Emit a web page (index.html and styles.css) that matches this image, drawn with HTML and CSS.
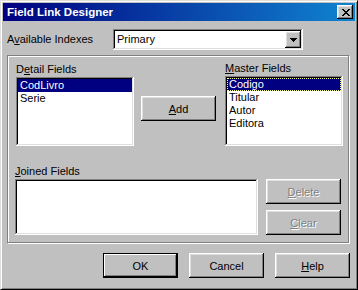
FILE: index.html
```html
<!DOCTYPE html>
<html lang="en">

<head>
    <meta charset="UTF-8">
    <title>Field Link Designer</title>
    <link rel="stylesheet" href="styles.css">
</head>

<body>
    <div class="window">
        <div class="titlebar">
            <span class="title">Field Link Designer</span>
            <div class="close-btn">
                <svg width="8" height="7" viewBox="0 0 8 7" shape-rendering="crispEdges">
                    <path fill="#000" d="M0 0h2v1H0z M6 0h2v1H6z M1 1h2v1H1z M5 1h2v1H5z M2 2h4v1H2z M3 3h2v1H3z M2 4h4v1H2z M1 5h2v1H1z M5 5h2v1H5z M0 6h2v1H0z M6 6h2v1H6z" />
                </svg>
            </div>
        </div>

        <div class="index-row">
            <label class="index-label">A<u>v</u>ailable Indexes</label>
            <div class="combo">
                <span class="combo-text">Primary</span>
                <div class="combo-btn">
                    <svg width="7" height="4" viewBox="0 0 7 4" shape-rendering="crispEdges">
                        <path fill="#000" d="M0 0h7v1H0z M1 1h5v1H1z M2 2h3v1H2z M3 3h1v1H3z" />
                    </svg>
                </div>
            </div>
        </div>

        <div class="panel">
            <div class="top-row">
                <div class="detail-col">
                    <div class="caption">D<u>e</u>tail Fields</div>
                    <div class="listbox detail-list">
                        <div class="item selected">CodLivro</div>
                        <div class="item">Serie</div>
                    </div>
                </div>
                <button class="btn add-btn"><u>A</u>dd</button>
                <div class="master-col">
                    <div class="caption"><u>M</u>aster Fields</div>
                    <div class="listbox master-list">
                        <div class="item selected focused">Codigo</div>
                        <div class="item">Titular</div>
                        <div class="item">Autor</div>
                        <div class="item">Editora</div>
                    </div>
                </div>
            </div>

            <div class="bottom-row">
                <div class="joined-col">
                    <div class="caption"><u>J</u>oined Fields</div>
                    <div class="listbox joined-list"></div>
                </div>
                <div class="side-btns">
                    <button class="btn disabled"><u>D</u>elete</button>
                    <button class="btn disabled"><u>C</u>lear</button>
                </div>
            </div>
        </div>

        <div class="dialog-btns">
            <button class="btn default">OK</button>
            <button class="btn">Cancel</button>
            <button class="btn"><u>H</u>elp</button>
        </div>
    </div>
</body>

</html>
```

FILE: styles.css
```css
* {
    margin: 0;
    padding: 0;
    box-sizing: border-box;
}

body {
    font-family: "Liberation Sans", Arial, sans-serif;
    font-size: 11px;
    line-height: 13px;
    color: #000;
    background: #c0c0c0;
}

.window {
    width: 358px;
    height: 290px;
    background: #c0c0c0;
    border: 1px solid;
    border-color: #dfdfdf #000 #000 #dfdfdf;
    box-shadow: inset 1px 1px #fff, inset -1px -1px #808080;
    padding: 2px;
}

.titlebar {
    height: 18px;
    display: flex;
    align-items: center;
    justify-content: space-between;
    padding-left: 4px;
    padding-right: 2px;
    background: linear-gradient(to right, #000080, #1084d0);
}

.title {
    color: #fff;
    font-weight: bold;
    font-size: 11.5px;
}

.close-btn {
    width: 16px;
    height: 14px;
    background: #c0c0c0;
    box-shadow: inset -1px -1px #000, inset 1px 1px #fff, inset -2px -2px #808080, inset 2px 2px #dfdfdf;
    display: flex;
    align-items: center;
    justify-content: center;
    padding-left: 1px;
}

.index-row {
    display: flex;
    align-items: center;
    margin-top: 8px;
    height: 21px;
}

.index-label {
    width: 110px;
    padding-left: 4px;
}

.combo {
    width: 190px;
    height: 21px;
    background: #fff;
    box-shadow: inset -1px -1px #fff, inset 1px 1px #808080, inset -2px -2px #dfdfdf, inset 2px 2px #000;
    display: flex;
    align-items: center;
    justify-content: space-between;
    padding: 2px;
}

.combo-text {
    padding-left: 2px;
}

.combo-btn {
    width: 16px;
    height: 17px;
    background: #c0c0c0;
    box-shadow: inset -1px -1px #000, inset 1px 1px #fff, inset -2px -2px #808080, inset 2px 2px #dfdfdf;
    display: flex;
    align-items: center;
    justify-content: center;
}

.panel {
    width: 342px;
    height: 188px;
    margin: 5px 0 0 4px;
    border: 1px solid #808080;
    box-shadow: 1px 1px #fff, inset 1px 1px #fff;
}

.top-row {
    display: flex;
    align-items: flex-start;
    padding: 6px 0 0 8px;
}

.caption {
    height: 13px;
    margin-bottom: 1px;
}

.detail-col {
    width: 118px;
    margin-top: 1px;
}

.master-col {
    width: 118px;
    margin-left: 9px;
}

.listbox {
    background: #fff;
    box-shadow: inset -1px -1px #fff, inset 1px 1px #808080, inset -2px -2px #dfdfdf, inset 2px 2px #000;
    padding: 2px;
}

.detail-list {
    height: 69px;
}

.master-list {
    height: 70px;
}

.item {
    height: 13px;
    line-height: 13px;
    padding-left: 2px;
}

.item.selected {
    background: #000080;
    color: #fff;
}

.item.focused {
    outline: 1px dotted #ffff80;
    outline-offset: -1px;
}

.btn {
    width: 75px;
    height: 25px;
    border: none;
    background: #c0c0c0;
    font-family: "Liberation Sans", Arial, sans-serif;
    font-size: 11px;
    color: #000;
    box-shadow: inset -1px -1px #000, inset 1px 1px #fff, inset -2px -2px #808080, inset 2px 2px #dfdfdf;
}

.btn.default {
    border: 1px solid #000;
    box-shadow: inset -1px -1px #000, inset 1px 1px #fff, inset -2px -2px #808080;
}

.btn.disabled {
    color: #808080;
    text-shadow: 1px 1px #fff;
}

.add-btn {
    margin: 34px 0 0 7px;
}

.bottom-row {
    display: flex;
    align-items: flex-start;
    margin-top: 19px;
    padding-left: 7px;
}

.joined-col {
    width: 243px;
}

.joined-list {
    height: 56px;
}

.side-btns {
    display: flex;
    flex-direction: column;
    gap: 6px;
    margin: 14px 0 0 8px;
}

.dialog-btns {
    display: flex;
    justify-content: flex-end;
    gap: 11px;
    margin-top: 10px;
    padding-right: 5px;
}
```
